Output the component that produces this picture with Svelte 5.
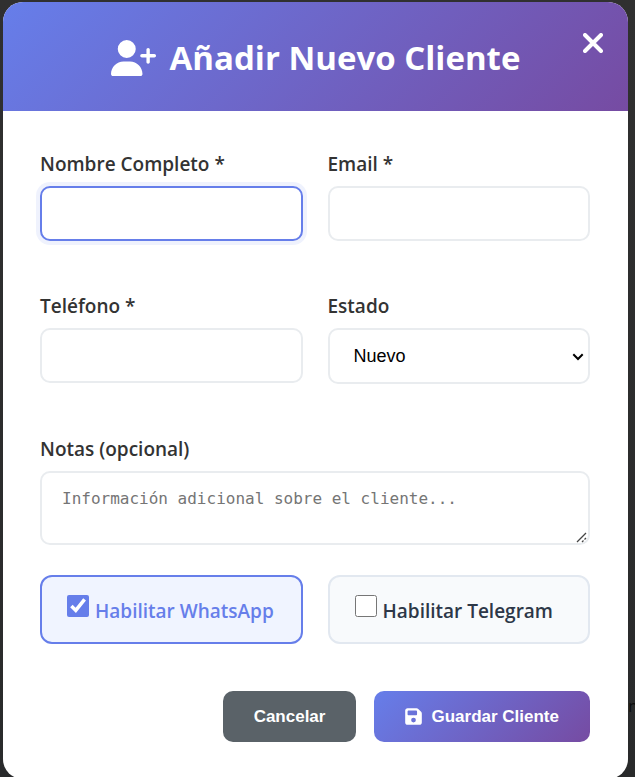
<script>
  let name = $state('');
  let email = $state('');
  let phone = $state('');
  let status = $state('nuevo');
  let notes = $state('');
  let whatsapp = $state(true);
  let telegram = $state(false);

  function focusOnMount(node) {
    node.focus();
  }
</script>

<div class="overlay">
  <span class="behind" aria-hidden="true">n</span>
  <div class="modal" role="dialog" aria-labelledby="modal-title">
    <header>
      <h2 id="modal-title">
        <svg class="user-plus" viewBox="0 0 640 512" aria-hidden="true">
          <path d="M96 128a128 128 0 1 1 256 0A128 128 0 1 1 96 128zM0 482.300C0 383.800 79.800 304 178.300 304h91.400C368.200 304 448 383.800 448 482.300c0 16.400-13.300 29.700-29.700 29.700H29.700C13.300 512 0 498.700 0 482.300zM504 312V248H440c-13.300 0-24-10.700-24-24s10.700-24 24-24h64V136c0-13.300 10.700-24 24-24s24 10.700 24 24v64h64c13.300 0 24 10.700 24 24s-10.700 24-24 24H552v64c0 13.300-10.700 24-24 24s-24-10.700-24-24z" />
        </svg>
        <span>Añadir Nuevo Cliente</span>
      </h2>
      <button class="close" type="button" aria-label="Cerrar">
        <svg viewBox="0 0 20 20" aria-hidden="true">
          <path d="M2 2 18 18M18 2 2 18" />
        </svg>
      </button>
    </header>

    <form onsubmit={(e) => e.preventDefault()}>
      <div class="grid">
        <div class="field">
          <label for="name">Nombre Completo *</label>
          <input id="name" class="control" type="text" bind:value={name} use:focusOnMount />
        </div>
        <div class="field">
          <label for="email">Email *</label>
          <input id="email" class="control" type="email" bind:value={email} />
        </div>
        <div class="field">
          <label for="phone">Teléfono *</label>
          <input id="phone" class="control" type="tel" bind:value={phone} />
        </div>
        <div class="field">
          <label for="status">Estado</label>
          <div class="select">
            <select id="status" class="control" bind:value={status}>
              <option value="nuevo">Nuevo</option>
              <option value="activo">Activo</option>
            </select>
            <svg viewBox="0 0 12 8" aria-hidden="true">
              <path d="M1.300 1.300 6 6 10.700 1.300" />
            </svg>
          </div>
        </div>
        <div class="field wide">
          <label for="notes">Notas (opcional)</label>
          <textarea id="notes" class="control" bind:value={notes} placeholder="Información adicional sobre el cliente..."></textarea>
        </div>
      </div>

      <div class="channels">
        <label class="channel" class:on={whatsapp}>
          <input type="checkbox" bind:checked={whatsapp} />
          <span>Habilitar WhatsApp</span>
        </label>
        <label class="channel" class:on={telegram}>
          <input type="checkbox" bind:checked={telegram} />
          <span>Habilitar Telegram</span>
        </label>
      </div>

      <div class="actions">
        <button class="btn cancel" type="button">Cancelar</button>
        <button class="btn save" type="submit">
          <svg viewBox="0 0 448 512" aria-hidden="true">
            <path d="M64 32C28.700 32 0 60.700 0 96V416c0 35.300 28.700 64 64 64H384c35.300 0 64-28.700 64-64V173.300c0-17-6.700-33.300-18.700-45.300L352 50.700C340 38.700 323.700 32 306.700 32H64zm0 96c0-17.700 14.300-32 32-32H288c17.700 0 32 14.300 32 32v64c0 17.700-14.300 32-32 32H96c-17.700 0-32-14.300-32-32V128zM224 288a64 64 0 1 1 0 128 64 64 0 1 1 0-128z" />
          </svg>
          Guardar Cliente
        </button>
      </div>
    </form>
  </div>
</div>

<style>
  :global(body) {
    margin: 0;
    background: #2d2d2d;
    overflow: hidden;
  }

  .overlay {
    position: relative;
    box-sizing: border-box;
    height: 100vh;
    padding: 2px 7px 0 3px;
    background: linear-gradient(#303030, #292a2b);
    font-family: 'Segoe UI', 'Open Sans', 'Noto Sans', sans-serif;
  }

  /* Page text that shows past the dialog's edge */
  .behind {
    position: absolute;
    right: -3px;
    bottom: 60px;
    color: #0c0c0c;
    font-size: 16px;
    line-height: 22px;
  }

  .modal {
    position: relative;
    background: #fff;
    border-radius: 20px;
    overflow: hidden;
  }

  header {
    position: relative;
    padding: 32px 37px 30px;
    background: linear-gradient(135deg, #667eea 0%, #764ba2 100%);
    color: #fff;
  }

  h2 {
    display: flex;
    align-items: center;
    justify-content: center;
    gap: 14px;
    margin: 0;
    font-size: 33px;
    font-weight: 700;
    line-height: 47px;
  }

  .user-plus {
    width: 45px;
    height: 36px;
    fill: currentColor;
  }

  .close {
    position: absolute;
    top: 26px;
    right: 20px;
    display: grid;
    place-items: center;
    width: 30px;
    height: 30px;
    padding: 0;
    border: 0;
    background: none;
    color: inherit;
    cursor: pointer;
  }

  .close svg {
    width: 20px;
    height: 20px;
    fill: none;
    stroke: currentColor;
    stroke-width: 4;
    stroke-linecap: round;
  }

  form {
    padding: 37px 38px 37px 37px;
  }

  .grid {
    display: grid;
    grid-template-columns: 1fr 1fr;
    gap: 49px 25px;
  }

  .field {
    display: flex;
    flex-direction: column;
    gap: 6px;
    min-width: 0;
  }

  .wide {
    grid-column: 1 / -1;
  }

  .field label {
    color: #333;
    font-size: 19px;
    font-weight: 600;
    line-height: 32px;
  }

  .control {
    display: block;
    box-sizing: border-box;
    width: 100%;
    height: 55px;
    padding: 0 20px;
    border: 2px solid #e9ecef;
    border-radius: 10px;
    background: #fff;
    color: #000;
    font-family: 'Liberation Sans', Arial, sans-serif;
    font-size: 18px;
    outline: none;
  }

  .control:focus {
    border-color: #667eea;
    box-shadow: 0 0 0 4px rgba(102, 126, 234, 0.1);
  }

  .select {
    position: relative;
  }

  select.control {
    height: 56px;
    padding: 0 24px;
    appearance: none;
  }

  .select svg {
    position: absolute;
    top: 25px;
    right: 6px;
    width: 12px;
    height: 8px;
    fill: none;
    stroke: #000;
    stroke-width: 2;
    pointer-events: none;
  }

  textarea.control {
    height: 74px;
    padding: 15px 20px;
    font-family: 'DejaVu Sans Mono', monospace;
    font-size: 16px;
    line-height: 22px;
    resize: vertical;
  }

  textarea::placeholder {
    color: #757575;
  }

  textarea::-webkit-resizer {
    background: url("data:image/svg+xml,%3Csvg xmlns='http://www.w3.org/2000/svg' width='15' height='15' fill='none' stroke='%23444' stroke-width='1.3'%3E%3Cpath d='M4 14 13 5M9 14l1.500-1.500M11.500 11.500 13 10'/%3E%3C/svg%3E") right bottom no-repeat;
  }

  .channels {
    display: grid;
    grid-template-columns: 1fr 1fr;
    gap: 25px;
    margin-top: 30px;
  }

  .channel {
    display: flex;
    align-items: center;
    gap: 6px;
    box-sizing: border-box;
    height: 69px;
    padding: 0 25px;
    border: 2px solid #e2e8f0;
    border-radius: 12px;
    background: #f8fafc;
    color: #2d3748;
    font-size: 19px;
    font-weight: 600;
    line-height: 32px;
    white-space: nowrap;
    cursor: pointer;
  }

  .channel.on {
    border-color: #667eea;
    background: #f0f4ff;
    color: #667eea;
  }

  .channel input {
    flex: none;
    width: 22px;
    height: 22px;
    margin: 0 0 7px;
    accent-color: #667eea;
  }

  .channel span {
    padding-top: 2px;
  }

  .actions {
    display: flex;
    justify-content: flex-end;
    gap: 18px;
    margin-top: 47px;
  }

  .btn {
    display: flex;
    align-items: center;
    gap: 9px;
    height: 51px;
    padding: 0 31px;
    border: 0;
    border-radius: 10px;
    color: #fff;
    font-family: 'Liberation Sans', Arial, sans-serif;
    font-size: 17px;
    font-weight: 700;
    cursor: pointer;
  }

  .cancel {
    background: #5a6268;
  }

  .save {
    background: linear-gradient(135deg, #667eea 0%, #764ba2 100%);
  }

  .save svg {
    width: 17px;
    height: 19px;
    fill: currentColor;
  }
</style>
